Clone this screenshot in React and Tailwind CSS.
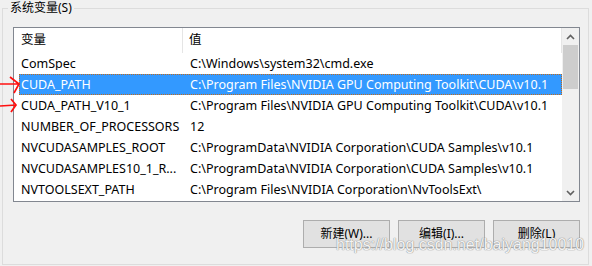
import React from "react";

const rows = [
  ["ComSpec", "C:\\Windows\\system32\\cmd.exe"],
  ["CUDA_PATH", "C:\\Program Files\\NVIDIA GPU Computing Toolkit\\CUDA\\v10.1", true],
  ["CUDA_PATH_V10_1", "C:\\Program Files\\NVIDIA GPU Computing Toolkit\\CUDA\\v10.1"],
  ["NUMBER_OF_PROCESSORS", "12"],
  ["NVCUDASAMPLES_ROOT", "C:\\ProgramData\\NVIDIA Corporation\\CUDA Samples\\v10.1"],
  ["NVCUDASAMPLES10_1_R...", "C:\\ProgramData\\NVIDIA Corporation\\CUDA Samples\\v10.1"],
  ["NVTOOLSEXT_PATH", "C:\\Program Files\\NVIDIA Corporation\\NvToolsExt\\"],
];

function Row({ name, value, selected }) {
  return (
    <div
      className={
        "flex h-[21px] items-center pt-[1px] " +
        (selected
          ? "bg-[#3399ff] text-white border border-dotted border-[#c26a1a]"
          : "text-black border border-transparent")
      }
    >
      <div className="w-[164px] pl-[1px] whitespace-nowrap overflow-hidden">{name}</div>
      <div className="pl-[6px] whitespace-nowrap">{value}</div>
    </div>
  );
}

function Button({ children }) {
  return (
    <div className="w-[87px] h-[28px] flex items-center justify-center bg-[#e1e1e1] border border-[#adadad] text-black">
      {children}
    </div>
  );
}

export default function App() {
  return (
    <div
      className="relative w-[592px] h-[266px] bg-[#f0f0f0] pt-[8px] pl-[2px] text-[12.5px] leading-none"
      style={{ fontFamily: '"Noto Sans", "Noto Sans CJK SC", sans-serif' }}
    >
      <div className="relative w-[587px] h-[257px] border border-[#dcdcdc] pt-[18px] pl-[10px]">
        <div className="absolute left-[5px] top-[-7px] bg-[#f0f0f0] px-[2px] text-black text-[12px] leading-[12px]">
          系统变量(S)
        </div>
        <div className="flex w-[567px] h-[175px] border border-[#828790] bg-white">
          <div className="flex-1 pl-[5px] flex flex-col overflow-hidden">
            <div className="flex h-[25px] items-center text-black">
              <div className="w-[164px] pl-[2px] h-full flex items-center border-r border-[#e5e5e5]">变量</div>
              <div className="flex-1 pl-[6px] h-full flex items-center border-r border-[#e5e5e5]">值</div>
            </div>
            {rows.map((r) => (
              <Row key={r[0]} name={r[0]} value={r[1]} selected={r[2]} />
            ))}
          </div>
          <div className="w-[17px] flex flex-col bg-[#f0f0f0]">
            <div className="h-[17px] flex items-center justify-center">
              <svg width="9" height="6" viewBox="0 0 9 6">
                <path d="M1 5 L4.5 1.5 L8 5" fill="none" stroke="#606060" strokeWidth="1.6" />
              </svg>
            </div>
            <div className="h-[44px] mx-[1px] bg-[#cdcdcd]" />
            <div className="flex-1" />
            <div className="h-[17px] flex items-center justify-center">
              <svg width="9" height="6" viewBox="0 0 9 6">
                <path d="M1 1 L4.5 4.5 L8 1" fill="none" stroke="#606060" strokeWidth="1.6" />
              </svg>
            </div>
          </div>
        </div>
        <div className="flex justify-end gap-[8px] w-[567px] mt-[18px] text-[12px]">
          <Button>新建(W)...</Button>
          <Button>编辑(I)...</Button>
          <Button>删除(L)</Button>
        </div>
      </div>

      <svg className="absolute left-0 top-[74px]" width="22" height="40" viewBox="0 0 22 40">
        <path d="M0 10 L18 10 M10 3 L19 10 L14 19" fill="none" stroke="#ff1010" strokeWidth="1.7" />
        <path d="M0 32 L16 31 M11 25 L16 31 L11 38" fill="none" stroke="#ff1010" strokeWidth="1.7" />
      </svg>

      <div
        className="absolute left-[336px] top-[237px] text-[16px] text-white/90 whitespace-nowrap [text-shadow:0_0_1px_#888,0_0_1px_#888]"
        style={{ fontFamily: '"Liberation Sans", Arial, sans-serif' }}
      >
        https://blog.csdn.net/baiyang10010
      </div>
    </div>
  );
}
